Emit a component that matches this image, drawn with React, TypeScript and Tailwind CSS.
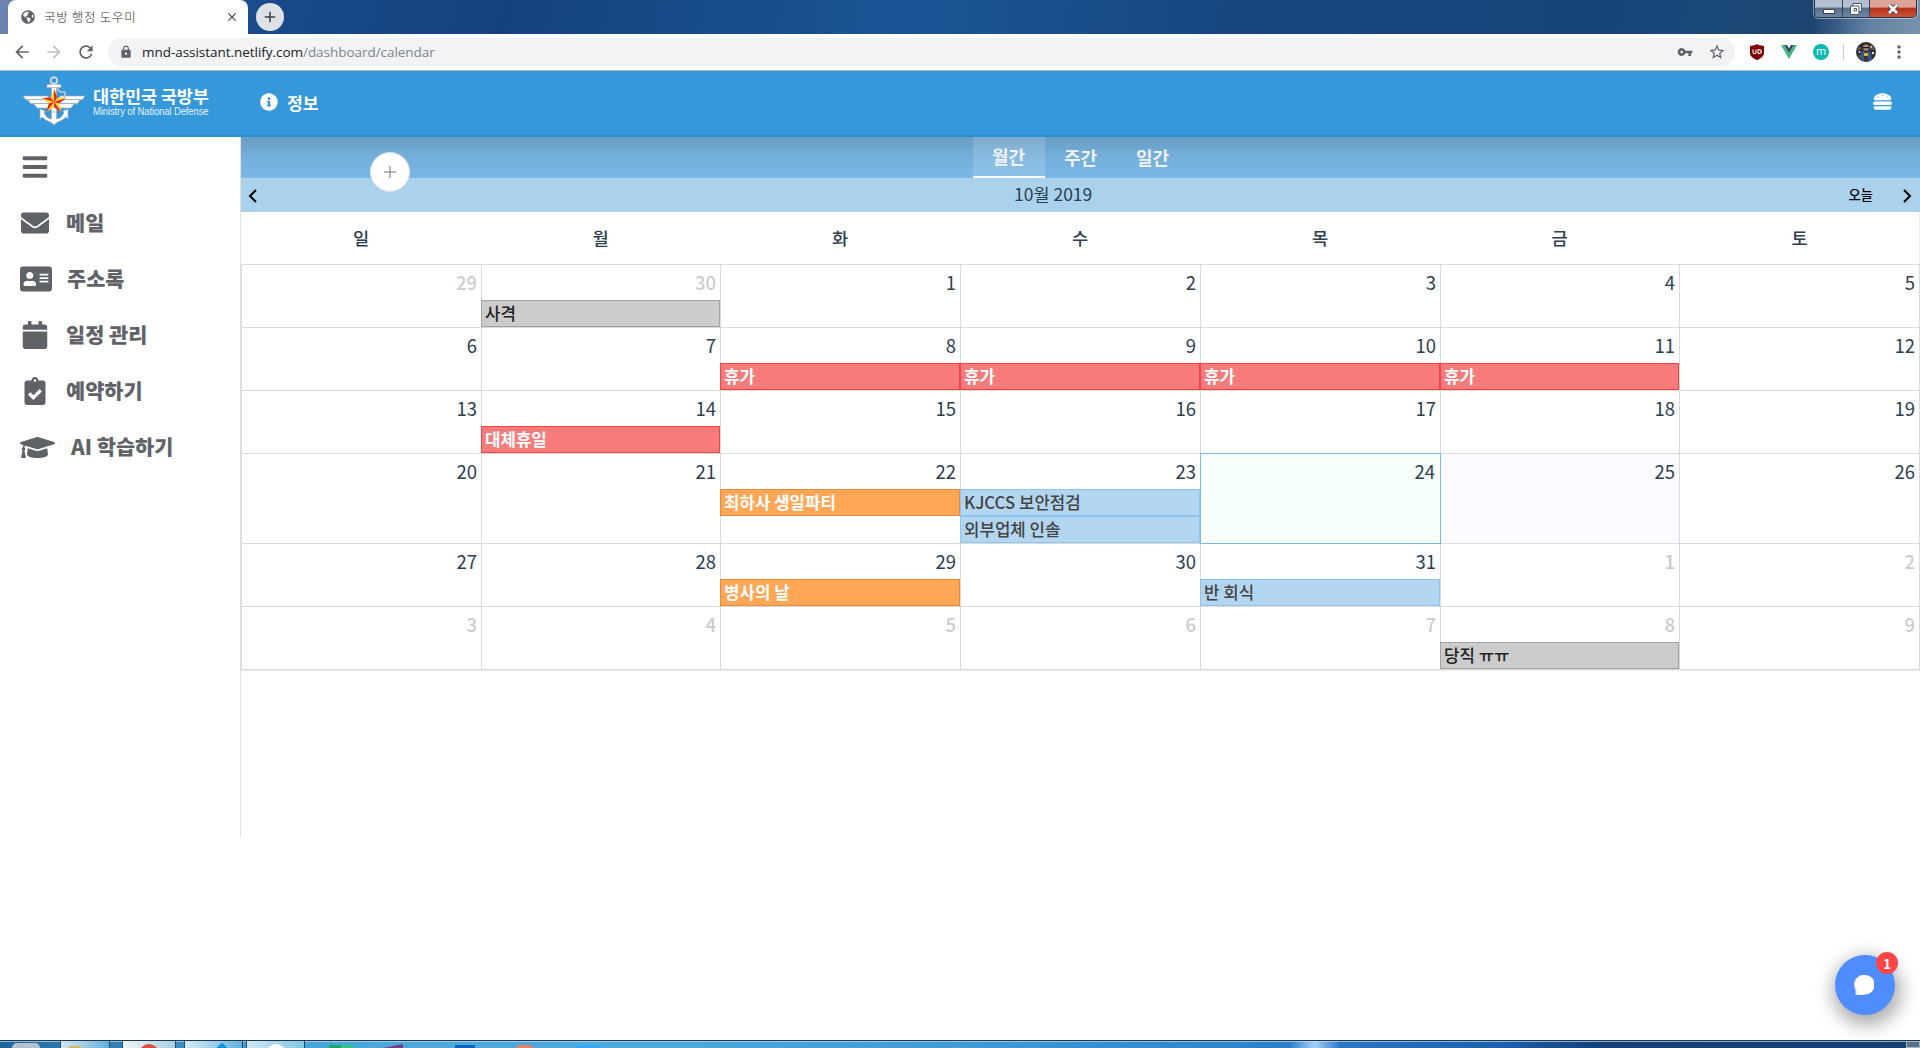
import React from "react";
import {
  FaBars, FaEnvelope, FaAddressCard, FaCalendar, FaClipboardCheck,
  FaGraduationCap, FaInfoCircle, FaHamburger, FaGlobeAmericas,
} from "react-icons/fa";
import {
  MdArrowBack, MdArrowForward, MdRefresh, MdLock, MdVpnKey, MdStarBorder, MdMoreVert, MdClose, MdAdd,
} from "react-icons/md";

type Tone = "gray" | "red" | "orange" | "blue";
type Ev = { t: string; c: Tone };
type Day = { n: number; out?: boolean; today?: boolean; selected?: boolean; ev?: Ev[] };

const tones: Record<Tone, string> = {
  gray: "bg-[#cccccc] border-[#a3a3a3] text-[#222] font-medium",
  red: "bg-[#f77b7b] border-[#ee4444] text-white font-bold",
  orange: "bg-[#ffa756] border-[#e88a33] text-white font-bold",
  blue: "bg-[#b2d6f0] border-[#8fc5ec] text-[#444] font-medium",
};

const vac: Ev[] = [{ t: "휴가", c: "red" }];
const weeks: Day[][] = [
  [{ n: 29, out: true }, { n: 30, out: true, ev: [{ t: "사격", c: "gray" }] }, { n: 1 }, { n: 2 }, { n: 3 }, { n: 4 }, { n: 5 }],
  [{ n: 6 }, { n: 7 }, { n: 8, ev: vac }, { n: 9, ev: vac }, { n: 10, ev: vac }, { n: 11, ev: vac }, { n: 12 }],
  [{ n: 13 }, { n: 14, ev: [{ t: "대체휴일", c: "red" }] }, { n: 15 }, { n: 16 }, { n: 17 }, { n: 18 }, { n: 19 }],
  [
    { n: 20 }, { n: 21 }, { n: 22, ev: [{ t: "최하사 생일파티", c: "orange" }] },
    { n: 23, ev: [{ t: "KJCCS 보안점검", c: "blue" }, { t: "외부업체 인솔", c: "blue" }] },
    { n: 24, selected: true }, { n: 25, today: true }, { n: 26 },
  ],
  [{ n: 27 }, { n: 28 }, { n: 29, ev: [{ t: "병사의 날", c: "orange" }] }, { n: 30 }, { n: 31, ev: [{ t: "반 회식", c: "blue" }] }, { n: 1, out: true }, { n: 2, out: true }],
  [{ n: 3, out: true }, { n: 4, out: true }, { n: 5, out: true }, { n: 6, out: true }, { n: 7, out: true }, { n: 8, out: true, ev: [{ t: "당직 ㅠㅠ", c: "gray" }] }, { n: 9, out: true }],
];

const cols = "grid grid-cols-[240px_239px_240px_240px_240px_239px_241px]";

function TitleBar() {
  return (
    <div className="flex h-[34px] items-start bg-[linear-gradient(100deg,#6c86b0_0px,#5f7cab_30px,#1a4a8c_260px,#15427f_500px,#1c5596_900px,#17457f_1250px,#17447a_1600px,#1c4a78_1700px,#1c446f_1790px,#6182a4_1845px,#7a93ac_100%)]">
      <div className="ml-2 flex h-[34px] w-60 items-center rounded-t-lg bg-white pr-[9px] pl-[13px]">
        <FaGlobeAmericas className="size-[14px] text-[#5f6368]" />
        <span className="ml-[9px] flex-1 text-[12.5px] font-light tracking-[0.7px] text-[#333]">국방 행정 도우미</span>
        <MdClose className="size-[14px] text-[#3c4043]" />
      </div>
      <div className="mt-[3px] ml-2 flex size-7 items-center justify-center rounded-full bg-[#dee1e6]">
        <MdAdd className="size-[18px] text-[#3c4043]" />
      </div>
      <div className="mr-[3px] ml-auto flex h-[18px] overflow-hidden rounded-b-[5px] border border-t-0 border-[#26364f] shadow-[0_0_0_1px_rgba(255,255,255,0.45)]">
        <div className="flex w-[28px] items-center justify-center border-r border-[#33435c] bg-linear-to-b from-[#b3c1d0] from-40% via-[#566f8b] via-50% to-[#7088a4]">
          <span className="mt-[5px] h-[5px] w-[12px] border border-[#445] bg-white" />
        </div>
        <div className="flex w-[27px] items-center justify-center border-r border-[#33435c] bg-linear-to-b from-[#b3c1d0] from-40% via-[#566f8b] via-50% to-[#7088a4]">
          <svg viewBox="0 0 12 12" className="size-3" fill="none"><path d="M3 .5h8.500v8H9v3H.5V3H3z" fill="#fff" stroke="#4a566b" /><path d="M3 3h6v6M4 5.500h2.500v2.500H4z" stroke="#4a566b" /></svg>
        </div>
        <div className="flex w-[46px] items-center justify-center bg-linear-to-b from-[#dda396] from-40% via-[#b93019] via-50% to-[#c9543a]">
          <svg viewBox="0 0 12 10" className="h-[10px] w-3"><path d="M2 1l8 8M10 1L2 9" stroke="#4a4558" strokeWidth="4.500" /><path d="M2 1l8 8M10 1L2 9" stroke="#fff" strokeWidth="2.600" /></svg>
        </div>
      </div>
    </div>
  );
}

function AddressBar() {
  return (
    <div className="flex h-[37px] items-center border-b border-[#b4b6b9] bg-white text-[#5f6368]">
      <MdArrowBack className="ml-[12px] size-5" />
      <MdArrowForward className="ml-3 size-5 text-[#bdc1c6]" />
      <MdRefresh className="ml-3 size-5" />
      <div className="ml-3 flex h-7 w-[1627px] items-center rounded-full bg-[#f1f3f4] pr-[9px] pl-[11px]">
        <MdLock className="size-[14px]" />
        <span className="ml-[9px] flex-1 font-['Open_Sans','Noto_Sans',sans-serif] text-[13.5px] tracking-[-0.04px] text-[#202124]">
          mnd-assistant.netlify.com<span className="text-[#80868b]">/dashboard/calendar</span>
        </span>
        <MdVpnKey className="mr-[15px] size-4" />
        <MdStarBorder className="size-[18px]" />
      </div>
      <svg viewBox="0 0 16 16" className="ml-[14px] size-4"><path d="M8 0l1.500 1L15 2v7c0 3-3 5.500-7 7-4-1.500-7-4-7-7V2l5.500-1z" fill="#800000" /><path d="M4 5.500V8q0 1.800 1.500 1.800T7 8V5.500M9 5.500v4.200M9 5.500q3.500.2 3.500 2.100T9 9.700" fill="none" stroke="#fff" strokeWidth="1.100" /></svg>
      <svg viewBox="0 0 16 14" className="ml-4 h-[14px] w-4"><path d="M0 0h3.200L8 8.300 12.800 0H16L8 14z" fill="#41b883" /><path d="M3.200 0h2.900L8 3.300 9.900 0h2.900L8 8.300z" fill="#35495e" /></svg>
      <div className="ml-4 flex size-4 items-center justify-center rounded-full bg-[#0dbab1] font-['Open_Sans',sans-serif] text-[11px] leading-none text-white">
        <span className="-mt-[3px]">m</span>
      </div>
      <div className="ml-[14px] h-4 w-px bg-[#c9cbce]" />
      <svg viewBox="0 0 20 20" className="ml-3 size-5">
        <clipPath id="avatar"><circle cx="10" cy="10" r="10" /></clipPath>
        <g clipPath="url(#avatar)">
          <rect width="20" height="20" fill="#2b2c33" />
          <path d="M0 5h5v3H0zM14 3h6v5h-6zM2 13h3v3H2z" fill="#57534a" />
          <path d="M4 20l1-9 3-3h4l3 3 1 9z" fill="#34598a" />
          <path d="M8 9h4v10H8z" fill="#3a3530" />
          <circle cx="10" cy="5.500" r="3" fill="#b58d64" />
          <path d="M7 5h6v1.300H7z" fill="#1a1a1a" />
          <path d="M8 11h4v3H8z" fill="#d9b23c" />
          <circle cx="3.500" cy="10" r="1" fill="#ddd" /><circle cx="17" cy="11" r="1.200" fill="#e8e8e8" /><circle cx="15" cy="5" r="1" fill="#d8d0b0" />
        </g>
      </svg>
      <MdMoreVert className="ml-[13px] size-5" />
    </div>
  );
}

function Emblem() {
  return (
    <svg viewBox="0 0 62 50" className="-mt-[7px] h-[50px] w-[62px]">
      <g stroke="#a9adb3" strokeWidth=".7" fill="#fff">
        <path d="M0 20h25l3 12H14l-3-4H8l-3-4H3z" />
        <path d="M62 20H37l-3 12h14l3-4h3l3-4h2z" />
        <path d="M28.500 8h5v30h-5z" />
        <path d="M24 8.500h14v3H24z" />
        <path d="M17 33l5 2-1 2q3 6 7.500 6V36h5v7q4.500 0 7.500-6l-1-2 5-2v10l-2-2q-4 4-8.500 5L31 49l-3.500-3q-4.500-1-8.500-5l-2 2z" />
      </g>
      <path d="M3 23.500h24M7 27.500h20M35 23.500h24M35 27.500h20" stroke="#9db4c8" strokeWidth="1" />
      <circle cx="31" cy="4.500" r="3.300" fill="none" stroke="#d3d6da" strokeWidth="1.900" />
      <path d="M34 11q2 6 6 5t1 6" fill="none" stroke="#c2c6cb" strokeWidth="1.500" />
      <path d="M31 13l3.300 8.500 8.700.4-6.800 5.500 2.300 8.600-7.500-4.800-7.500 4.800 2.300-8.600L19 21.900l8.700-.4z" fill="#ffd92e" />
      <path d="M31 13v13l3.300-4.500zM43 21.900L31 26l5.200 1.400zM38.500 36L31 26v5.200zM23.500 36L31 26l-5.200 1.400zM19 21.900L31 26l-3.300-4.500z" fill="#e5262e" />
    </svg>
  );
}

function SiteHeader() {
  return (
    <header className="relative z-10 flex h-[66px] items-center border-b-2 border-[#3090cf] bg-[#3498db] text-white">
      <div className="ml-[23px] flex items-center pt-0.5">
        <Emblem />
        <div className="ml-[8px] flex flex-col">
          <span className="-mt-1 text-[17.5px] leading-[20px] font-bold whitespace-nowrap tracking-[-0.1px]">대한민국 국방부</span>
          <span className="origin-left scale-y-110 font-['Liberation_Sans',sans-serif] text-[9.5px] leading-[12px] whitespace-nowrap tracking-[-0.12px] text-[#e3f1fb]">Ministry of National Defense</span>
        </div>
      </div>
      <div className="-mt-px ml-[51px] flex items-center">
        <FaInfoCircle className="size-[18px]" />
        <span className="ml-[9px] text-[17.2px] font-bold">정보</span>
      </div>
      <FaHamburger className="-mt-[3px] mr-7 ml-auto size-[19px]" />
    </header>
  );
}

const menu = [
  { label: "메일", icon: <FaEnvelope className="size-7" />, pad: "pl-[21px]", gap: "ml-[17px]" },
  { label: "주소록", icon: <FaAddressCard className="size-8" />, pad: "pl-5", gap: "ml-[15px]" },
  { label: "일정 관리", icon: <FaCalendar className="size-7" />, pad: "pl-[21px]", gap: "ml-[17px]" },
  { label: "예약하기", icon: <FaClipboardCheck className="size-7" />, pad: "pl-[21px]", gap: "ml-[17px]" },
  { label: "AI 학습하기", icon: <FaGraduationCap className="size-[35px]" />, pad: "pl-5", gap: "ml-4" },
];

function Sidebar() {
  return (
    <aside className="flex h-[700px] w-[241px] shrink-0 flex-col border-r border-[#e2e2e2] pt-[2px] text-[#5f6368]">
      <div className="flex h-14 items-center pl-[21px]"><FaBars className="size-7" /></div>
      {menu.map((m) => (
        <div key={m.label} className={"flex h-14 items-center " + m.pad}>
          {m.icon}
          <span className={"pb-px text-[20.8px] leading-none font-black whitespace-nowrap " + m.gap}>{m.label}</span>
        </div>
      ))}
    </aside>
  );
}

function DayCell({ d, last }: { d: Day; last: boolean }) {
  return (
    <div
      className={
        "relative min-h-[63px] border-t border-l " +
        (d.selected ? "z-10 -mr-px -mb-px border-r border-b border-[#7fb8e0] bg-[#f6fffa] " : "border-[#dadada] ") +
        (d.today ? "bg-[#fafaff] " : "") +
        (last ? "border-r" : "")
      }
    >
      <div className={"h-[35px] text-right text-[18.500px] leading-[34px] " + (d.out ? "font-medium text-[#cccccc] " : "text-[#2c3e50] ") + (d.selected ? "pr-[5px]" : "pr-1")}>{d.n}</div>
      {d.ev?.map((e) => (
        <div key={e.t} className={"relative -ml-px h-[27px] border pl-[3px] text-[16.800px] leading-[24px] whitespace-nowrap " + tones[e.c]}>{e.t}</div>
      ))}
    </div>
  );
}

function Calendar() {
  return (
    <main className="flex w-[1679px] flex-col">
      <div className="relative flex h-[41px] justify-center bg-linear-to-b from-[#699dc3] via-[#74afdb] via-50% to-[#7bb8e5] text-[18px] leading-[39px] font-bold text-[#eef3f8]">
        <div className="w-[72px] border-b-2 border-white bg-white/15 text-center">월간</div>
        <div className="w-[72px] pt-px text-center">주간</div>
        <div className="w-[72px] pt-px text-center">일간</div>
        <button className="absolute top-[15px] left-[129px] z-10 flex size-10 items-center justify-center rounded-full border border-[#dcdfe6] bg-white">
          <svg viewBox="0 0 12 12" className="size-3" stroke="#777" strokeWidth="1"><path d="M6 0v12M0 6h12" /></svg>
        </button>
      </div>
      <div className="flex h-[34px] items-center bg-[#aad2ed] pr-2 pl-[7px]">
        <svg viewBox="0 0 9 14" className="mt-0.5 h-[14px] w-[9px]" fill="none" stroke="#000" strokeWidth="2"><path d="M8 1L2 7l6 6" /></svg>
        <span className="ml-[757px] pb-0.5 text-[17.500px] text-[#2c3e50]">10월 2019</span>
        <span className="mr-[30px] ml-auto text-[13.300px] font-medium text-black">오늘</span>
        <svg viewBox="0 0 9 14" className="mt-0.5 h-[14px] w-[9px]" fill="none" stroke="#000" strokeWidth="2"><path d="M1 1l6 6-6 6" /></svg>
      </div>
      <div className={cols + " h-[52px] border-r border-[#eee] text-center text-[17.600px] leading-[52px] font-medium text-[#2c3e50]"}>
        {["일", "월", "화", "수", "목", "금", "토"].map((w) => <div key={w}>{w}</div>)}
      </div>
      <div className="border-b border-[#dadada] shadow-[0_1px_0_#ebebeb]">
        {weeks.map((w, i) => (
          <div key={i} className={cols}>
            {w.map((d, j) => <DayCell key={j} d={d} last={j === 6} />)}
          </div>
        ))}
      </div>
    </main>
  );
}

function Taskbar() {
  return (
    <div className="flex h-2 items-end overflow-hidden border-t border-[#1c3850] bg-[linear-gradient(90deg,#1f6296_0px,#2c77ac_60px,#4ba6d8_300px,#4fa9dc_640px,#3f98d3_1000px,#2c7fc6_1290px,#a8d0f5_1315px,#2b76c2_1340px,#1d5fae_1500px,#153f77_1600px,#16406f_100%)] shadow-[inset_0_1px_0_rgba(190,220,240,0.7)]">
      <div className="ml-3 h-[5px] w-7 rounded-t-full bg-[#b4c2d0]" />
      <div className="ml-5 flex h-[7px] w-[50px] justify-center border-x border-[#244b66] bg-linear-to-r from-[#d4e8ef] to-[#62aeda]"><span className="mt-[5px] mr-5 h-1 w-3 bg-[#d8b866]" /></div>
      <div className="ml-[12px] flex h-[7px] w-[54px] justify-center border-x border-[#244b66] bg-linear-to-r from-[#f1f5f2] to-[#a8cfe0]"><span className="mt-[3px] h-3 w-5 rounded-t-full bg-[#db4f42]" /></div>
      <div className="ml-[8px] flex h-[7px] w-[59px] justify-center border-x border-[#244b66] bg-linear-to-r from-[#d7ecf3] to-[#62b0db]"><span className="mt-[4px] ml-4 h-3 w-3 rotate-45 bg-[#1292dd]" /></div>
      <div className="ml-[3px] flex h-[7px] w-[59px] justify-center border-x border-[#244b66] bg-linear-to-r from-[#d0e8f2] to-[#84c5e4]"><span className="mt-[3px] h-3 w-5 rounded-t-full bg-white" /></div>
      <div className="ml-6 h-[3px] w-6 bg-linear-to-r from-[#21a366] from-50% to-[#33c481] to-50%" />
      <svg viewBox="0 0 20 4" className="ml-[30px] h-1 w-5"><path d="M0 4L20 0v4z" fill="#80397b" /></svg>
      <div className="ml-[52px] h-[3px] w-5 bg-[#0a63bd]" />
      <div className="ml-[42px] h-[3px] w-4 rounded-t-full bg-[#ed8265]" />
      <div className="ml-[44px] h-[3px] w-6 bg-[#3da6f2]" />
      <div className="ml-auto h-[7px] w-[14px] border border-[#a5b8ca] bg-[#59728a]" />
    </div>
  );
}

export default function App() {
  return (
    <div className="relative flex h-[1048px] w-[1920px] flex-col overflow-hidden bg-white font-['Noto_Sans_CJK_KR',sans-serif]">
      <TitleBar />
      <AddressBar />
      <SiteHeader />
      <div className="flex flex-1 items-start">
        <Sidebar />
        <Calendar />
      </div>
      <Taskbar />
      <div className="absolute right-[25px] bottom-[33px] flex size-[60px] items-center justify-center rounded-full bg-[#4e8cff] shadow-[2px_6px_18px_4px_rgba(0,0,0,0.34)]">
        <svg viewBox="0 0 20 20" className="mr-0.5 size-5">
          <path d="M9.500 0a9.500 9.500 0 0 0-8 14.500V20H9.500z" fill="#e4edff" />
          <path d="M11 0a9.500 9.500 0 0 1 0 19.500H4V16A9.500 9.500 0 0 1 11 0z" fill="#fff" />
        </svg>
        <span className="absolute -top-[3px] -right-[3px] flex size-[22px] items-center justify-center rounded-full bg-[#ff4646] text-[13px] leading-none font-bold text-white">1</span>
      </div>
    </div>
  );
}
